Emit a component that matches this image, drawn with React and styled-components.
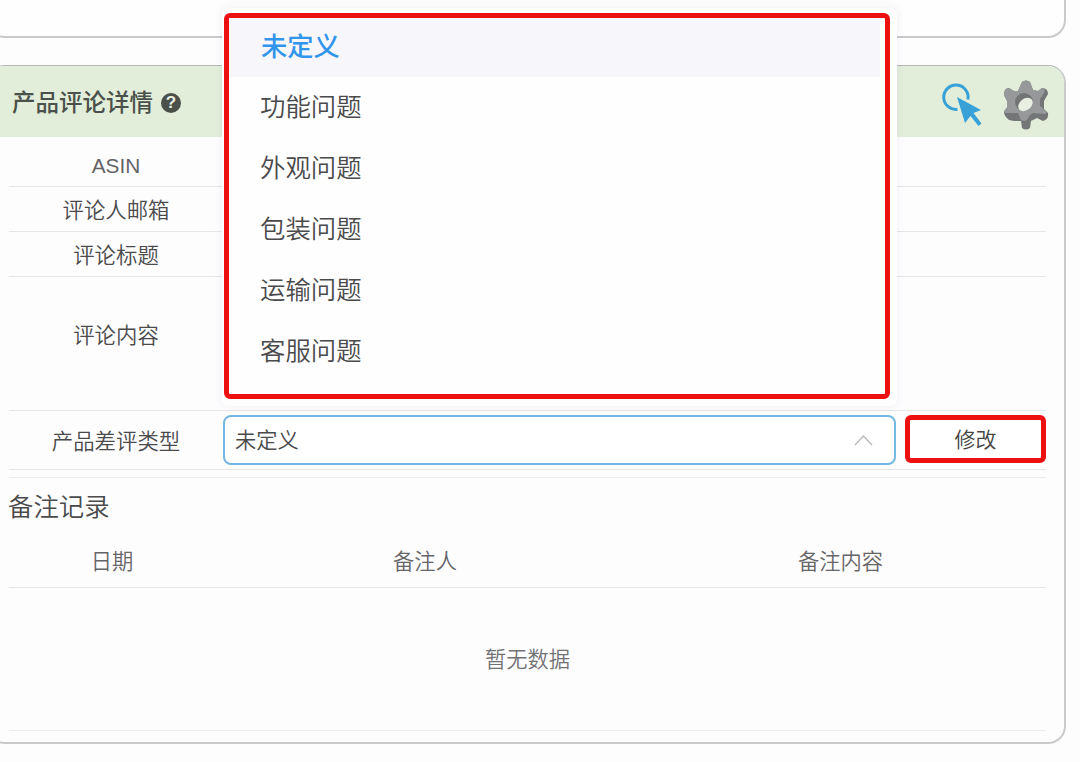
import styled, { createGlobalStyle } from 'styled-components';

const GlobalStyle = createGlobalStyle`
  * {
    box-sizing: border-box;
  }

  body {
    margin: 0;
    overflow: hidden;
    background: #fefdfe;
    color: #4a4a4c;
    font-family: "Liberation Sans", "Noto Sans CJK SC", sans-serif;
    font-weight: 350;
  }
`;

const Page = styled.div`
  position: relative;
  width: 1080px;
  height: 762px;
  overflow: hidden;
`;

const PreviousCard = styled.section`
  height: 38px;
  margin: 0 14px 27px -14px;
  border: 2px solid #cac9cb;
  border-top: 0;
  border-radius: 0 0 18px 18px;
  background: #fefefe;
`;

const Card = styled.section`
  height: 679px;
  margin: 0 14px 0 -14px;
  border: 2px solid #cac9cb;
  border-top: 1px solid #b5b8b5;
  border-radius: 18px;
  background: #fefdfe;
  overflow: hidden;
`;

const CardHeader = styled.header`
  display: flex;
  align-items: center;
  height: 71px;
  padding: 2px 15px 0 24px;
  background: #e2eeda;
`;

const CardTitle = styled.h2`
  margin: 0;
  color: #4a504a;
  font-size: 23.5px;
  font-weight: 500;
  line-height: 30px;
`;

const HelpMark = styled.span`
  width: 20px;
  height: 20px;
  margin-left: 8px;
  border-radius: 50%;
  background: #4b504b;
  color: #e9f1e4;
  font-size: 17px;
  font-weight: 700;
  line-height: 20px;
  text-align: center;
`;

const Tools = styled.div`
  display: flex;
  align-items: center;
  gap: 20px;
  margin-left: auto;
  padding-top: 4px;

  svg {
    display: block;
  }
`;

const CardBody = styled.div`
  padding: 0 18px 0 21px;
`;

const Row = styled.div`
  display: flex;
  align-items: center;
  height: ${({ $height }) => $height}px;
  border-bottom: 1px solid #e6e5ea;
`;

const Label = styled.div`
  width: 214px;
  padding-top: ${({ $drop }) => Math.max($drop || 0, 0)}px;
  padding-bottom: ${({ $drop }) => Math.max(-$drop || 0, 0)}px;
  color: ${({ $muted }) => ($muted ? '#646466' : 'inherit')};
  font-size: ${({ $muted }) => ($muted ? '20.8px' : '21.4px')};
  line-height: 28px;
  text-align: center;
`;

const Select = styled.div`
  display: flex;
  align-items: center;
  justify-content: space-between;
  width: 673px;
  height: 50px;
  padding: 0 21px 4px 10px;
  border: 2px solid #72b8e2;
  border-radius: 8px;
  background: #fff;
  font-size: 21.3px;

  svg {
    margin-top: 4px;
  }
`;

const EditButton = styled.button`
  width: 141px;
  height: 48px;
  margin: 0 0 2px 9px;
  padding: 0 0 2px;
  border: 5px solid #ec1010;
  border-radius: 6px;
  background: #fff;
  color: #444;
  font: inherit;
  font-size: 21px;
`;

const Notes = styled.div`
  margin-top: 7px;
  border-top: 1px solid #eeecf1;
`;

const NotesTitle = styled.h3`
  margin: 0 0 0 -1px;
  padding-top: 11px;
  height: 58px;
  font-size: 25.4px;
  font-weight: 350;
  line-height: 36px;
`;

const NotesHead = styled.div`
  display: grid;
  grid-template-columns: 206px 420px 1fr;
  align-items: center;
  height: 52px;
  padding-bottom: 5px;
  border-bottom: 1px solid #e6e5ea;
  color: #656567;
  font-size: 21.3px;
  text-align: center;
`;

const Empty = styled.div`
  display: flex;
  align-items: center;
  justify-content: center;
  height: 143px;
  padding-bottom: 4px;
  border-bottom: 1px solid #efedf1;
  color: #727274;
  font-size: 21.3px;
`;

const Dropdown = styled.div`
  position: absolute;
  top: 8px;
  left: 222px;
  width: 675px;
  padding: 5px 7px 7px 2px;
  border-radius: 6px;
  background: #fefefe;
  box-shadow: 0 0 8px rgba(90, 80, 120, 0.09);
`;

const OptionList = styled.ul`
  height: 386px;
  margin: 0;
  padding: 0;
  border: 5px solid #ec1010;
  border-radius: 6px;
  list-style: none;
`;

const Option = styled.li`
  display: flex;
  align-items: center;
  height: ${({ $selected }) => ($selected ? 59 : 61)}px;
  margin: 0 5px 0 0;
  padding: ${({ $selected }) => ($selected ? '0 32px 6px' : '0 31px 5px')};
  background: ${({ $selected }) => ($selected ? '#f6f6fb' : 'transparent')};
  color: ${({ $selected }) => ($selected ? '#3295ec' : '#4a4a4c')};
  font-size: ${({ $selected }) => ($selected ? '26.3px' : '25.4px')};
  font-weight: ${({ $selected }) => ($selected ? 500 : 350)};
`;

const fields = [
  { label: 'ASIN', height: 50, drop: 9, muted: true },
  { label: '评论人邮箱', height: 45, drop: 3 },
  { label: '评论标题', height: 45, drop: 3 },
  { label: '评论内容', height: 134, drop: -15 },
];

const options = ['未定义', '功能问题', '外观问题', '包装问题', '运输问题', '客服问题'];

function PointerIcon() {
  return (
    <svg width="42" height="46" viewBox="0 0 42 46">
      <path d="M16.5 27.3A12.2 12.2 0 1 1 26.9 17.5" fill="none" stroke="#38a2d8" strokeWidth="3" />
      <path d="M16 15L40 28L32.5 31L40.5 41.5L37.5 44L29.5 34L24 41Z" fill="#38a2d8" />
    </svg>
  );
}

function GearIcon() {
  return (
    <svg width="46" height="52" viewBox="0 0 46 52">
      <path
        d="M15 12L19 3Q23 0 27 3L30 11L35 12L39 9Q45 9 45 15L41 22V30L45 34Q46 40 40 42L34 39L28 42L27 49Q23 52 19 49L18 42L11 42L6 41Q1 37 1 33L4 29V22L1 16Q1 9 6 9L11 12Z"
        fill="#747577"
      />
      <path
        d="M15 12L19 3Q23 0 27 3L30 11L35 12L39 9Q43 9 41 14L37 20V27L44 33L42 35L30 34L27 36L24 41Q21 43 18 41L15 34L11 34L2 34L1 32L4 28V22L1 16Q1 9 6 9L11 12Z"
        fill="#979899"
      />
      <circle cx="21" cy="23" r="9" fill="#737476" />
      <ellipse cx="22.5" cy="25.5" rx="8" ry="5.8" transform="rotate(-38 22.5 25.5)" fill="#e8efe2" />
    </svg>
  );
}

export default function App() {
  return (
    <>
      <GlobalStyle />
      <Page>
        <PreviousCard />
        <Card>
          <CardHeader>
            <CardTitle>产品评论详情</CardTitle>
            <HelpMark>?</HelpMark>
            <Tools>
              <PointerIcon />
              <GearIcon />
            </Tools>
          </CardHeader>
          <CardBody>
            {fields.map(({ label, height, drop, muted }) => (
              <Row key={label} $height={height}>
                <Label $drop={drop} $muted={muted}>{label}</Label>
              </Row>
            ))}
            <Row $height={59}>
              <Label $drop={3}>产品差评类型</Label>
              <Select>
                未定义
                <svg width="19" height="12" viewBox="0 0 19 12">
                  <path d="M1 11L9.5 2L18 11" fill="none" stroke="#bbb" strokeWidth="1.5" />
                </svg>
              </Select>
              <EditButton>修改</EditButton>
            </Row>
            <Notes>
              <NotesTitle>备注记录</NotesTitle>
              <NotesHead>
                <span>日期</span>
                <span>备注人</span>
                <span>备注内容</span>
              </NotesHead>
              <Empty>暂无数据</Empty>
            </Notes>
          </CardBody>
        </Card>
        <Dropdown>
          <OptionList>
            {options.map((option, index) => (
              <Option key={option} $selected={index === 0}>
                {option}
              </Option>
            ))}
          </OptionList>
        </Dropdown>
      </Page>
    </>
  );
}
